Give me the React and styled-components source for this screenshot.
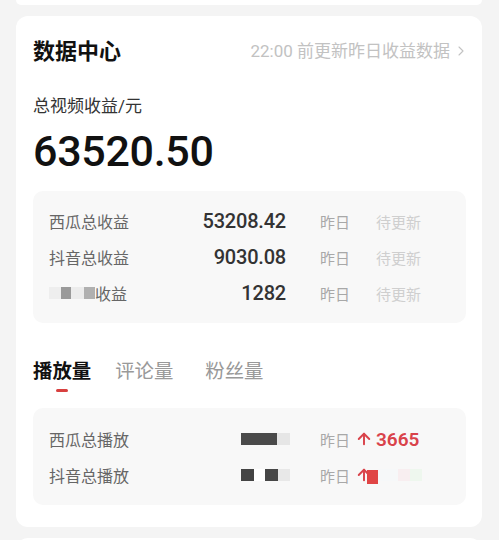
import React from "react";
import styled, { createGlobalStyle } from "styled-components";
import { ArrowUp, ChevronRight } from "lucide-react";

const GlobalStyle = createGlobalStyle`
  html, body {
    margin: 0;
    padding: 0;
    background: #f4f4f4;
    font-family: "Roboto", "Noto Sans CJK SC", sans-serif;
  }
`;

const Page = styled.div`
  width: 499px;
  height: 540px;
  overflow: hidden;
  display: flex;
  flex-direction: column;
  gap: 11px;
`;

const Card = styled.div`
  margin: 0 17px 0 16px;
  background: #fff;
  flex-shrink: 0;
  padding: ${(p) => (p.$stub ? "0" : "0 16px 22px 17px")};
  height: ${(p) => p.$height || "auto"};
  border-radius: ${(p) => (p.$stub === "top" ? "0 0 12px 12px" : p.$stub === "bottom" ? "12px 12px 0 0" : "12px")};
`;

const Header = styled.div`
  height: 72px;
  display: flex;
  align-items: center;
  justify-content: space-between;
`;

const Title = styled.div`
  font-size: 22px;
  font-weight: 700;
  color: #111;
  line-height: 30px;
`;

const HintLink = styled.div`
  display: flex;
  align-items: center;
  gap: 3px;
  font-size: 17px;
  color: #c2c2c2;
  line-height: 24px;
  margin-top: -3px;
  margin-right: -3px;
`;

const Subtitle = styled.div`
  margin-top: 6px;
  font-size: 17px;
  color: #333;
  line-height: 24px;
`;

const BigNumber = styled.div`
  margin-top: 7px;
  font-size: 43px;
  font-weight: 500;
  color: #111;
  line-height: 52px;
  letter-spacing: -0.3px;
`;

const Panel = styled.div`
  margin-top: ${(p) => p.$top || "0"};
  background: #f8f8f8;
  border-radius: 10px;
  padding: ${(p) => p.$pad || "12px 0"};
`;

const Row = styled.div`
  height: 36px;
  display: grid;
  grid-template-columns: ${(p) => p.$cols || "137px 100px 1fr"};
  align-items: center;
  padding-left: 16px;
`;

const Label = styled.div`
  font-size: 16px;
  color: #666;
  display: flex;
  align-items: center;
`;

const Amount = styled.div`
  font-size: 20px;
  font-weight: 500;
  color: #333;
  text-align: right;
  letter-spacing: -0.2px;
`;

const Day = styled.div`
  display: flex;
  align-items: center;
  padding-left: ${(p) => p.$pad || 0}px;
`;

const Yesterday = styled.span`
  font-size: 15px;
  font-weight: 400;
  color: #a8a8a8;
`;

const Pending = styled.span`
  font-size: 15px;
  color: #cfcfcf;
  padding-left: 26px;
`;

const Blots = styled.div`
  display: flex;
  align-items: center;
`;

const Blot = styled.span`
  display: inline-block;
  width: ${(p) => p.$w}px;
  height: ${(p) => p.$h || 12}px;
  background: ${(p) => p.$c};
`;

const Tabs = styled.div`
  margin-top: 34px;
  display: flex;
  align-items: flex-start;
`;

const Tab = styled.div`
  display: flex;
  flex-direction: column;
  align-items: center;
  margin-right: ${(p) => p.$gap || 0}px;
  font-size: 19.4px;
  line-height: 30px;
  font-weight: ${(p) => (p.$active ? 700 : 400)};
  color: ${(p) => (p.$active ? "#111" : "#999")};
`;

const Indicator = styled.span`
  margin-top: 2px;
  width: 12px;
  height: 3px;
  border-radius: 2px;
  background: ${(p) => (p.$on ? "#d8403f" : "transparent")};
`;

const Trend = styled.span`
  display: flex;
  align-items: center;
  gap: 3px;
  margin-left: 5px;
  font-size: 19px;
  font-weight: 600;
  color: #d9434b;
`;

const incomeRows = [
  { label: "西瓜总收益", value: "53208.42" },
  { label: "抖音总收益", value: "9030.08" },
  { label: null, value: "1282" },
];

export default function App() {
  return (
    <>
      <GlobalStyle />
      <Page>
        <Card $stub="top" $height="5px" />
        <Card>
          <Header>
            <Title>数据中心</Title>
            <HintLink>
              22:00 前更新昨日收益数据
              <ChevronRight size={16} strokeWidth={1.6} />
            </HintLink>
          </Header>
          <Subtitle>总视频收益/元</Subtitle>
          <BigNumber>63520.50</BigNumber>

          <Panel $top="14px">
            {incomeRows.map((r) => (
              <Row key={r.value}>
                <Label>
                  {r.label || (
                    <>
                      <Blots>
                        <Blot $w={12} $c="#eeeeee" />
                        <Blot $w={10} $c="#9a9a9a" />
                        <Blot $w={13} $c="#ececec" />
                        <Blot $w={11} $c="#b0b0b0" />
                      </Blots>
                      收益
                    </>
                  )}
                </Label>
                <Amount>{r.value}</Amount>
                <Day $pad={34}>
                  <Yesterday>昨日</Yesterday>
                  <Pending>待更新</Pending>
                </Day>
              </Row>
            ))}
          </Panel>

          <Tabs>
            <Tab $active $gap={24}>
              播放量
              <Indicator $on />
            </Tab>
            <Tab $gap={32}>
              评论量
              <Indicator />
            </Tab>
            <Tab>
              粉丝量
              <Indicator />
            </Tab>
          </Tabs>

          <Panel $top="16px" $pad="13px 0 12px">
            <Row $cols="192px 79px 1fr">
              <Label>西瓜总播放</Label>
              <Blots>
                <Blot $w={36} $c="#4a4a4a" />
                <Blot $w={13} $c="#e6e6e6" />
              </Blots>
              <Day>
                <Yesterday>昨日</Yesterday>
                <Trend>
                  <ArrowUp size={18} strokeWidth={2.6} />
                  3665
                </Trend>
              </Day>
            </Row>
            <Row $cols="192px 79px 1fr">
              <Label>抖音总播放</Label>
              <Blots>
                <Blot $w={13} $c="#444" />
                <Blot $w={11} $c="#fff" />
                <Blot $w={13} $c="#474747" />
                <Blot $w={12} $c="#e8e8e8" />
              </Blots>
              <Day>
                <Yesterday>昨日</Yesterday>
                <Trend>
                  <ArrowUp size={18} strokeWidth={2.6} />
                  <Blots>
                    <Blot $w={11} $h={14} $c="#e04545" style={{ marginLeft: -9, marginTop: 4 }} />
                    <Blot $w={20} $c="#f6f8f9" />
                    <Blot $w={12} $c="#f8eef0" />
                    <Blot $w={12} $c="#eef7ee" />
                  </Blots>
                </Trend>
              </Day>
            </Row>
          </Panel>
        </Card>
        <Card $stub="bottom" $height="20px" />
      </Page>
    </>
  );
}
